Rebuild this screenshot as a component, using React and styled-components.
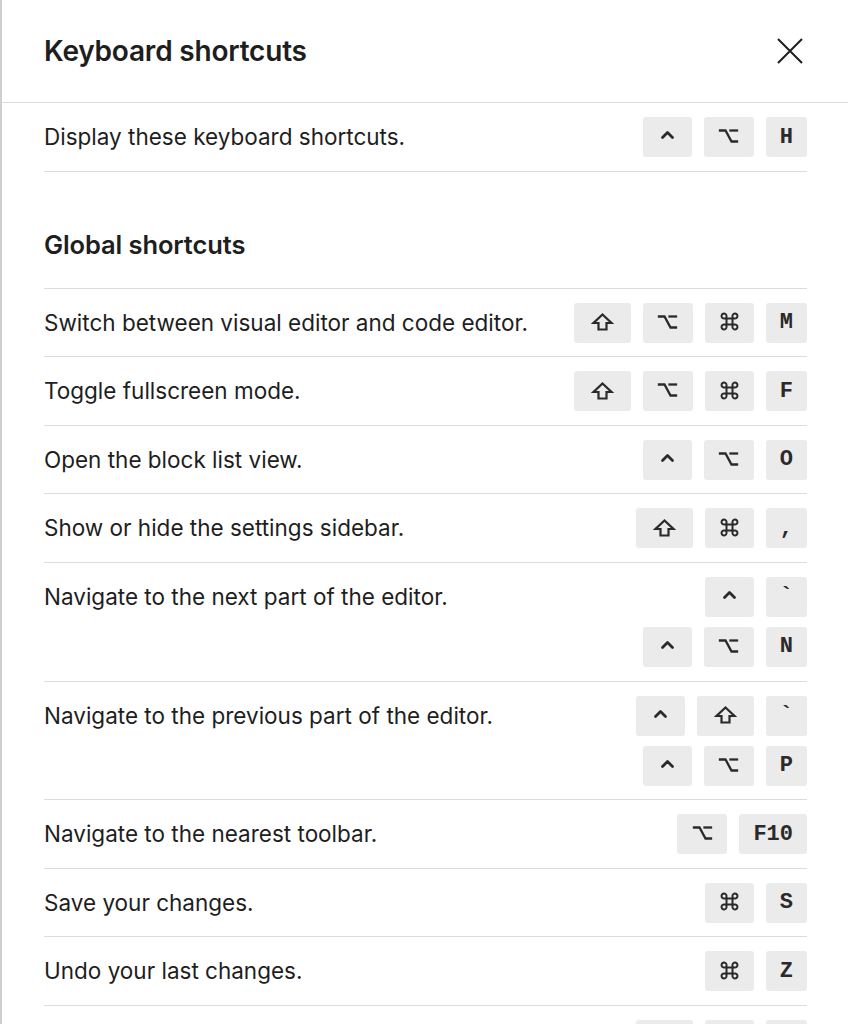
import React from "react";
import styled, { createGlobalStyle } from "styled-components";

const GlobalStyle = createGlobalStyle`
  html, body { margin: 0; padding: 0; background: #fff; }
  body {
    font-family: Inter, "Noto Sans", "Liberation Sans", sans-serif;
    color: #1e1e1e;
    -webkit-font-smoothing: antialiased;
  }
  * { box-sizing: border-box; }
`;

const Panel = styled.div`
  min-height: 100vh;
  border-left: 2px solid #cfcfcf;
  background: #fff;
`;

const Header = styled.header`
  height: 103px;
  display: flex;
  align-items: center;
  justify-content: space-between;
  padding: 0 42px 0 42px;
  border-bottom: 1px solid #dcdcdc;
`;

const Title = styled.h1`
  margin: 0;
  font-size: 28px;
  font-weight: 600;
  letter-spacing: -0.2px;
  color: #1e1e1e;
`;

const CloseButton = styled.button`
  width: 32px;
  height: 32px;
  padding: 0;
  border: 0;
  background: transparent;
  display: flex;
  align-items: center;
  justify-content: center;
  cursor: pointer;
  color: #1e1e1e;
`;

const Content = styled.main`
  padding: 0 41px 0 42px;
`;

const Section = styled.section`
  margin-top: ${(p) => (p.$first ? "0" : "58px")};
`;

const SectionTitle = styled.h2`
  margin: 0 0 28px;
  height: 30px;
  line-height: 30px;
  font-size: 25.5px;
  font-weight: 600;
  letter-spacing: -0.1px;
  color: #1e1e1e;
`;

const List = styled.ul`
  list-style: none;
  margin: 0;
  padding: 0;
  border-top: ${(p) => (p.$bordered ? "1px solid #dcdcdc" : "0")};
`;

const Row = styled.li`
  display: flex;
  justify-content: space-between;
  align-items: flex-start;
  padding: 14px 0 13.6px;
  border-bottom: 1px solid #dcdcdc;
`;

const Description = styled.span`
  font-size: 22.5px;
  line-height: 40px;
  height: 40px;
  color: #1e1e1e;
`;

const Combos = styled.div`
  display: flex;
  flex-direction: column;
  align-items: flex-end;
  gap: 10px;
`;

const Combo = styled.div`
  display: flex;
  gap: 12px;
`;

const Key = styled.kbd`
  height: 40px;
  min-width: ${(p) => p.$w || 41}px;
  padding: 0 14px;
  display: inline-flex;
  align-items: center;
  justify-content: center;
  background: #ebebeb;
  border-radius: 3px;
  color: #2a2a2a;
  font-family: "Liberation Mono", "DejaVu Sans Mono", monospace;
  font-weight: bold;
  font-size: 22px;
`;

const Glyph = styled.svg`
  display: block;
  overflow: visible;
  margin-top: ${(p) => p.$dy || 0}px;
`;

const CtrlIcon = () => (
  <Glyph width="13" height="8" viewBox="0 0 13 8" $dy={-4} fill="none" stroke="currentColor" strokeWidth="2.8" strokeLinecap="round" strokeLinejoin="round">
    <polyline points="1.5,6.5 6.5,1.5 11.5,6.5" />
  </Glyph>
);

const OptionIcon = () => (
  <Glyph width="19" height="14" viewBox="0 0 19 14" $dy={-2} fill="none" stroke="currentColor" strokeWidth="2.3" strokeLinecap="square">
    <path d="M1 1.5 H6.5 L12.5 12.5 H18" />
    <path d="M11.5 1.5 H18" />
  </Glyph>
);

const CmdIcon = () => (
  <Glyph width="17" height="17" viewBox="0 0 17 17" $dy={-2} fill="none" stroke="currentColor" strokeWidth="2">
    <path d="M5.5 5.5 H11.5 V11.5 H5.5 Z" />
    <path d="M5.5 5.5 V3.5 A2.5 2.5 0 1 0 3.5 5.5 H5.5" />
    <path d="M11.5 5.5 V3.5 A2.5 2.5 0 1 1 13.5 5.5 H11.5" />
    <path d="M5.5 11.5 V13.5 A2.5 2.5 0 1 1 3.5 11.5 H5.5" />
    <path d="M11.5 11.5 V13.5 A2.5 2.5 0 1 0 13.5 11.5 H11.5" />
  </Glyph>
);

const ShiftIcon = () => (
  <Glyph width="21" height="18" viewBox="0 0 21 18" $dy={-1} fill="none" stroke="currentColor" strokeWidth="2.2" strokeLinejoin="miter">
    <path d="M10.5 1.5 L19.5 10 H14.5 V16.5 H6.5 V10 H1.5 Z" />
  </Glyph>
);

const symbols = {
  "⌃": { icon: CtrlIcon, w: 49, label: "Control" },
  "⌥": { icon: OptionIcon, w: 50, label: "Option" },
  "⌘": { icon: CmdIcon, w: 49, label: "Command" },
  "⇧": { icon: ShiftIcon, w: 57, label: "Shift" },
};

function KeyCap({ k }) {
  const s = symbols[k];
  if (s) {
    const Icon = s.icon;
    return (
      <Key $w={s.w} aria-label={s.label} title={s.label}>
        <Icon />
      </Key>
    );
  }
  return <Key>{k}</Key>;
}

const intro = [{ text: "Display these keyboard shortcuts.", combos: [["⌃", "⌥", "H"]] }];

const global = [
  { text: "Switch between visual editor and code editor.", combos: [["⇧", "⌥", "⌘", "M"]] },
  { text: "Toggle fullscreen mode.", combos: [["⇧", "⌥", "⌘", "F"]] },
  { text: "Open the block list view.", combos: [["⌃", "⌥", "O"]] },
  { text: "Show or hide the settings sidebar.", combos: [["⇧", "⌘", ","]] },
  { text: "Navigate to the next part of the editor.", combos: [["⌃", "`"], ["⌃", "⌥", "N"]] },
  { text: "Navigate to the previous part of the editor.", combos: [["⌃", "⇧", "`"], ["⌃", "⌥", "P"]] },
  { text: "Navigate to the nearest toolbar.", combos: [["⌥", "F10"]] },
  { text: "Save your changes.", combos: [["⌘", "S"]] },
  { text: "Undo your last changes.", combos: [["⌘", "Z"]] },
  { text: "Redo your last undo.", combos: [["⇧", "⌘", "Z"]] },
];

function ShortcutRows({ items }) {
  return items.map((item) => (
    <Row key={item.text}>
      <Description>{item.text}</Description>
      <Combos>
        {item.combos.map((c, i) => (
          <Combo key={i}>
            {c.map((k, j) => (
              <KeyCap key={j} k={k} />
            ))}
          </Combo>
        ))}
      </Combos>
    </Row>
  ));
}

export default function App() {
  return (
    <>
      <GlobalStyle />
      <Panel>
        <Header>
          <Title>Keyboard shortcuts</Title>
          <CloseButton aria-label="Close dialog">
            <svg width="26" height="26" viewBox="0 0 26 26" fill="none">
              <path d="M1 1 L25 25 M25 1 L1 25" stroke="currentColor" strokeWidth="2" />
            </svg>
          </CloseButton>
        </Header>
        <Content>
          <Section $first>
            <List>
              <ShortcutRows items={intro} />
            </List>
          </Section>
          <Section>
            <SectionTitle>Global shortcuts</SectionTitle>
            <List $bordered>
              <ShortcutRows items={global} />
            </List>
          </Section>
        </Content>
      </Panel>
    </>
  );
}
